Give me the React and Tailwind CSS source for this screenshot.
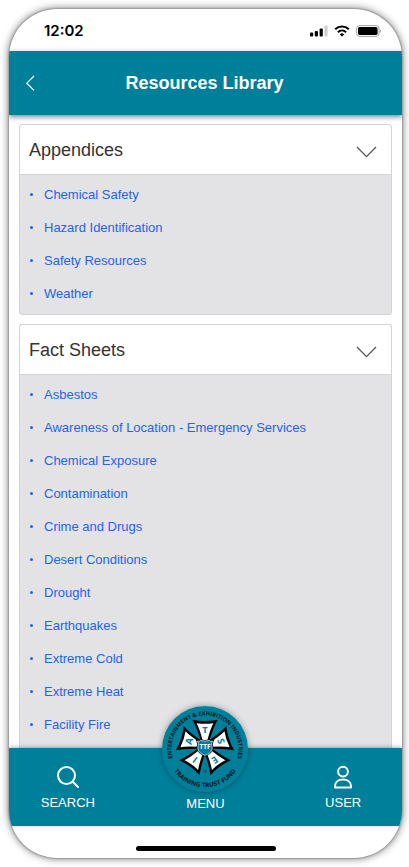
import React, { useState } from 'react';

const SECTIONS = [
  {
    title: 'Appendices',
    items: ['Chemical Safety', 'Hazard Identification', 'Safety Resources', 'Weather'],
  },
  {
    title: 'Fact Sheets',
    items: [
      'Asbestos',
      'Awareness of Location - Emergency Services',
      'Chemical Exposure',
      'Contamination',
      'Crime and Drugs',
      'Desert Conditions',
      'Drought',
      'Earthquakes',
      'Extreme Cold',
      'Extreme Heat',
      'Facility Fire',
    ],
  },
];

const ARMS = [
  { letter: 'T', angle: 0 },
  { letter: 'S', angle: 72 },
  { letter: 'E', angle: 144 },
  { letter: 'I', angle: 216 },
  { letter: 'A', angle: 288 },
];

const StatusBar = () => (
  <div className="flex h-[42px] shrink-0 items-center justify-between pl-[35px] pr-5 pt-0.5">
    <span className="font-['Inter',sans-serif] text-[15px] font-semibold leading-5 text-black">12:02</span>
    <div className="flex items-center gap-1.5">
      <svg className="h-3 w-[18px]" viewBox="0 0 18 12">
        <rect x="0" y="7.5" width="3.2" height="4" rx="1" />
        <rect x="4.8" y="6" width="3.2" height="5.5" rx="1" />
        <rect x="9.6" y="3.5" width="3.2" height="8" rx="1" />
        <rect x="14.4" y="0.5" width="3.2" height="11" rx="1" fill="#cfcfcf" />
      </svg>
      <svg className="h-3 w-4" viewBox="0 0 16 12" fill="none" stroke="#000" strokeWidth="2">
        <path d="M1.2 4.3a9.8 9.8 0 0 1 13.6 0" />
        <path d="M3.9 7.2a6 6 0 0 1 8.2 0" />
        <path d="M8 11.6 5.8 9.4a3.2 3.2 0 0 1 4.4 0Z" fill="#000" stroke="none" />
      </svg>
      <svg className="h-3 w-[26px]" viewBox="0 0 26 12">
        <rect x="0.6" y="0.6" width="22.4" height="10.8" rx="3" fill="none" stroke="#a3a3a3" strokeWidth="1" />
        <rect x="2" y="2" width="19.6" height="8" rx="1.8" />
        <path d="M24 4.2v3.6c1.6-.6 1.6-3 0-3.6Z" fill="#a3a3a3" />
      </svg>
    </div>
  </div>
);

const Logo = () => (
  <svg className="h-[86px] w-[86px]" viewBox="0 0 256 256">
    <defs>
      <path id="ring-top" d="M28 128a100 100 0 1 1 200 0a100 100 0 0 1 -200 0" transform="rotate(-90 128 128)" />
      <path id="ring-bottom" d="M14 128a114 114 0 0 0 228 0" />
    </defs>
    <circle cx="128" cy="128" r="128" fill="#007f9b" />
    <g fontFamily="'Open Sans', sans-serif" fontWeight="700" fill="#08161b" textAnchor="middle">
      <text fontSize="17">
        <textPath href="#ring-top" startOffset="50%">ENTERTAINMENT &amp; EXHIBITION INDUSTRIES</textPath>
      </text>
      <text fontSize="19">
        <textPath href="#ring-bottom" startOffset="50%">TRAINING TRUST FUND</textPath>
      </text>
    </g>
    {ARMS.map(({ letter, angle }) => (
      <g key={letter} transform={`rotate(${angle} 128 120)`}>
        <path d="M90 41Q128 49 166 41Q154 60 138 112H118Q102 60 90 41Z" fill="#050505" />
        <path d="M103 51Q128 55 153 51Q144 66 133 110H123Q112 66 103 51Z" fill="#fff" />
        <text
          x="128"
          y="80"
          fontSize="28"
          fontFamily="'Open Sans', sans-serif"
          fontWeight="700"
          fill="#007f9b"
          textAnchor="middle"
        >
          {letter}
        </text>
      </g>
    ))}
    <path
      d="M106 104q6 3 9-2q13 5 26 0q3 5 9 2q-4 9-1 18c2 14-9 20-21 25c-12-5-23-11-21-25q3-9-1-18Z"
      fill="#007f9b"
      stroke="#050505"
      strokeWidth="7"
    />
    <path
      d="M106 104q6 3 9-2q13 5 26 0q3 5 9 2q-4 9-1 18c2 14-9 20-21 25c-12-5-23-11-21-25q3-9-1-18Z"
      fill="#007f9b"
      stroke="#fff"
      strokeWidth="2"
    />
    <text x="128" y="128" fontSize="19" fontFamily="'Open Sans', sans-serif" fontWeight="700" fill="#fff" textAnchor="middle">
      TTF
    </text>
    <text x="129" y="200" fontSize="10" fontFamily="'Open Sans', sans-serif" fill="#08161b" textAnchor="middle">
      ®
    </text>
  </svg>
);

const Section = ({ title, items, last }) => {
  const [open, setOpen] = useState(true);

  return (
    <section
      className={`shrink-0 border border-[#d3d4d8] bg-[#e3e3e5] ${
        last ? 'grow rounded-t-[3px] border-b-0' : 'rounded-[3px]'
      }`}
    >
      <h2>
        <button
          type="button"
          aria-expanded={open}
          onClick={() => setOpen(!open)}
          className="flex h-[50px] w-full items-center justify-between rounded-t-[3px] border-b border-[#d3d4d8] bg-white pl-[9px] pr-[14px] text-left text-[18px] leading-6 text-[#333]"
        >
          {title}
          <svg className="mt-1 h-3 w-[21px]" viewBox="0 0 21 12" fill="none" stroke="#555" strokeWidth="1.3">
            <path d="M1 1l9.5 9.6L20 1" />
          </svg>
        </button>
      </h2>
      {open && (
        <ul className="pb-1 pt-[3px]">
          {items.map((item) => (
            <li key={item} className="flex h-[33px] items-center gap-[11px] pl-[10px]">
              <span className="h-[3px] w-[3px] rounded-full bg-[#2563eb]" />
              <a href="#" className="text-[13px] leading-5 text-[#2563eb]">
                {item}
              </a>
            </li>
          ))}
        </ul>
      )}
    </section>
  );
};

const BottomNav = () => (
  <nav className="relative h-[78px] shrink-0 bg-[#007f9b] text-[13px] leading-5 text-white shadow-[0_-1px_4px_rgba(0,0,0,0.3)]">
    <div className="-mx-2.5 grid grid-cols-3">
      <a href="#" className="flex flex-col items-center gap-1 pt-[17px]">
        <svg className="h-6 w-6" viewBox="0 0 24 24" fill="none" stroke="#fff" strokeWidth="2" strokeLinecap="round">
          <circle cx="10.5" cy="10.5" r="8.5" />
          <path d="M16.8 16.8 22 22" />
        </svg>
        SEARCH
      </a>
      <a href="#" className="relative flex flex-col items-center pt-[46px]">
        <span className="absolute -top-[42px] rounded-full shadow-[0_0_6px_rgba(0,0,0,0.35)]">
          <Logo />
        </span>
        MENU
      </a>
      <a href="#" className="flex flex-col items-center gap-1 pt-[17px]">
        <svg className="h-6 w-6" viewBox="0 0 24 24" fill="none" stroke="#fff" strokeWidth="2" strokeLinejoin="round">
          <circle cx="12" cy="6.6" r="4.9" />
          <path d="M4 22.6v-1.4c0-4 3-6.6 8-6.6s8 2.6 8 6.6v1.4Z" />
        </svg>
        USER
      </a>
    </div>
  </nav>
);

export default function App() {
  return (
    <div className="h-screen bg-white py-[9px] pl-[9px] pr-[7px] font-['Liberation_Sans',Arial,sans-serif]">
      <div className="flex h-full flex-col overflow-hidden rounded-[48px] bg-white shadow-[0_0_2px_rgba(0,0,0,0.5),0_0_9px_rgba(0,0,0,0.6)]">
        <StatusBar />
        <header className="z-10 flex h-16 shrink-0 items-center bg-[#007f9b] px-4 text-white shadow-[0_2px_5px_rgba(40,50,90,0.6)]">
          <button type="button" aria-label="Back" className="flex w-6 shrink-0">
            <svg className="h-4 w-[11px]" viewBox="0 0 11 16" fill="none" stroke="#fff" strokeWidth="1.2">
              <path d="M9 1 1.8 8.2 9 15.4" />
            </svg>
          </button>
          <h1 className="grow pr-[26px] text-center text-[18px] font-bold leading-6">Resources Library</h1>
        </header>
        <main className="flex min-h-0 grow flex-col gap-[9px] overflow-hidden px-2.5 pt-[9px]">
          {SECTIONS.map((section, i) => (
            <Section key={section.title} {...section} last={i === SECTIONS.length - 1} />
          ))}
        </main>
        <BottomNav />
        <div className="flex h-8 shrink-0 items-end justify-center pb-[7px]">
          <div className="h-[5px] w-[140px] rounded-full bg-black" />
        </div>
      </div>
    </div>
  );
}
